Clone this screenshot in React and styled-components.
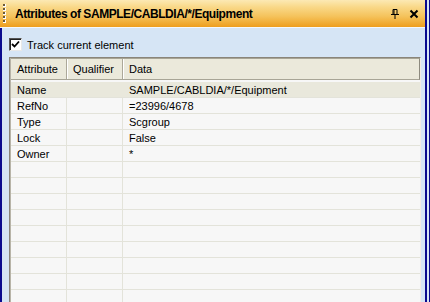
import React from "react";
import styled, { createGlobalStyle } from "styled-components";

const Global = createGlobalStyle`
  html, body { margin: 0; padding: 0; }
  body { width: 430px; height: 302px; overflow: hidden; background: #d6e5f5; font-family: "Liberation Sans", Arial, sans-serif; }
`;

const Frame = styled.div`
  display: flex;
  width: 430px;
  height: 302px;
  overflow: hidden;
`;

const Panel = styled.div`
  width: 425px;
  display: flex;
  flex-direction: column;
`;

const RightEdge = styled.div`
  width: 5px;
  background: linear-gradient(to right, #0a0a8e 0 2px, #d6e5f5 2px 4px, #0a0a8e 4px 5px);
`;

const TitleBar = styled.div`
  height: 27px;
  display: flex;
  align-items: center;
  background: linear-gradient(to bottom, #fce9b4 0%, #f9d98a 25%, #f5c35c 60%, #ee9e1e 100%);
  border-bottom: 1px solid #f4f8fc;
`;

const Grip = styled.svg`
  width: 8px;
  height: 27px;
  margin-left: 1px;
  flex: none;
`;

const Title = styled.div`
  font-weight: bold;
  font-size: 12px;
  color: #000;
  margin-left: 6px;
  flex: 1;
  white-space: nowrap;
  letter-spacing: -0.45px;
`;

const TitleButton = styled.svg`
  flex: none;
  display: block;
`;

const Body = styled.div`
  flex: 1;
  background: #d6e5f5;
  border-left: 2px solid #0a0a8e;
  padding: 10px 4px 0 7px;
  display: flex;
  flex-direction: column;
  min-height: 0;
`;

const CheckRow = styled.label`
  display: flex;
  align-items: center;
  height: 13px;
  font-size: 11px;
  color: #000;
  gap: 5px;
`;

const CheckBox = styled.span`
  width: 11px;
  height: 11px;
  background: #fff;
  border-top: 1px solid #555;
  border-left: 1px solid #555;
  border-right: 1px solid #e8e8e8;
  border-bottom: 1px solid #e8e8e8;
  box-shadow: inset 1px 1px 0 #222;
  display: flex;
  align-items: center;
  justify-content: center;
`;

const Grid = styled.div`
  margin-top: 6px;
  flex: 1;
  border-top: 1px solid #8a857a;
  border-left: 1px solid #8a857a;
  border-right: 1px solid #f1ebe6;
  background: #f7f7f7;
  box-shadow: inset 1px 1px 0 #b8b4a8;
  font-size: 11px;
  color: #000;
  display: flex;
  flex-direction: column;
  overflow: hidden;
`;

const cols = "56px 56px 1fr";

const HeaderRow = styled.div`
  display: grid;
  grid-template-columns: ${cols};
  height: 20px;
  background: #ebe9db;
  border-top: 1px solid #a8a596;
  border-bottom: 1px solid #a8a596;
  border-right: 1px solid #8d8a7e;
  margin-left: 1px;
  margin-bottom: 2px;
  flex: none;
`;

const HeaderCell = styled.div`
  display: flex;
  align-items: center;
  padding-left: 6px;
  border-right: ${(p) => (p.$last ? "none" : "1px solid #aca899")};
  box-shadow: ${(p) => (p.$last ? "none" : "1px 0 0 #fff")};
`;

const Row = styled.div`
  display: grid;
  grid-template-columns: ${cols};
  height: 15px;
  border-bottom: 1px solid #e3e3da;
  background: ${(p) => (p.$selected ? "#e9e8dc" : "#f7f7f7")};
  margin-left: 1px;
  flex: none;
`;

const Cell = styled.div`
  display: flex;
  align-items: center;
  padding-left: 6px;
  white-space: nowrap;
  border-right: ${(p) => (p.$last || p.$plain ? "none" : "1px solid #e3e3da")};
  ${(p) => (p.$plain && !p.$last ? "margin-right: 1px;" : "")}
`;

const rows = [
  { a: "Name", q: "", d: "SAMPLE/CABLDIA/*/Equipment", sel: true },
  { a: "RefNo", q: "", d: "=23996/4678" },
  { a: "Type", q: "", d: "Scgroup" },
  { a: "Lock", q: "", d: "False" },
  { a: "Owner", q: "", d: "*" },
];
while (rows.length < 14) rows.push({ a: "", q: "", d: "" });

export default function App() {
  return (
    <>
      <Global />
      <Frame>
        <Panel>
          <TitleBar>
            <Grip viewBox="0 0 8 27">
              {[4, 8, 12, 16, 20].map((y) => (
                <g key={y}>
                  <rect x="2" y={y} width="3" height="3" fill="#fff" />
                  <rect x="2" y={y} width="2" height="2" fill="#6b5a3a" />
                </g>
              ))}
            </Grip>
            <Title>Attributes of SAMPLE/CABLDIA/*/Equipment</Title>
            <TitleButton width="10" height="12" viewBox="0 0 10 12" style={{ marginRight: 9 }}>
              <path d="M3 1.5h4v5H3z M4 1.5v5" fill="none" stroke="#000" strokeWidth="1" />
              <path d="M1 6.5h8" stroke="#000" strokeWidth="1" />
              <path d="M5 7v4" stroke="#000" strokeWidth="1" />
            </TitleButton>
            <TitleButton width="10" height="10" viewBox="0 0 10 10" style={{ marginRight: 6 }}>
              <path d="M1.5 1.5l7 7M8.5 1.5l-7 7" stroke="#000" strokeWidth="2" />
            </TitleButton>
          </TitleBar>
          <Body>
            <CheckRow>
              <CheckBox>
                <svg width="9" height="9" viewBox="0 0 9 9">
                  <path d="M1 4l2.5 2.5L8 1.5" fill="none" stroke="#000" strokeWidth="1.8" />
                </svg>
              </CheckBox>
              Track current element
            </CheckRow>
            <Grid>
              <HeaderRow>
                <HeaderCell>Attribute</HeaderCell>
                <HeaderCell>Qualifier</HeaderCell>
                <HeaderCell $last>Data</HeaderCell>
              </HeaderRow>
              {rows.map((r, i) => (
                <Row key={i} $selected={r.sel}>
                  <Cell $plain={r.sel}>{r.a}</Cell>
                  <Cell $plain={r.sel}>{r.q}</Cell>
                  <Cell $last>{r.d}</Cell>
                </Row>
              ))}
            </Grid>
          </Body>
        </Panel>
        <RightEdge />
      </Frame>
    </>
  );
}
